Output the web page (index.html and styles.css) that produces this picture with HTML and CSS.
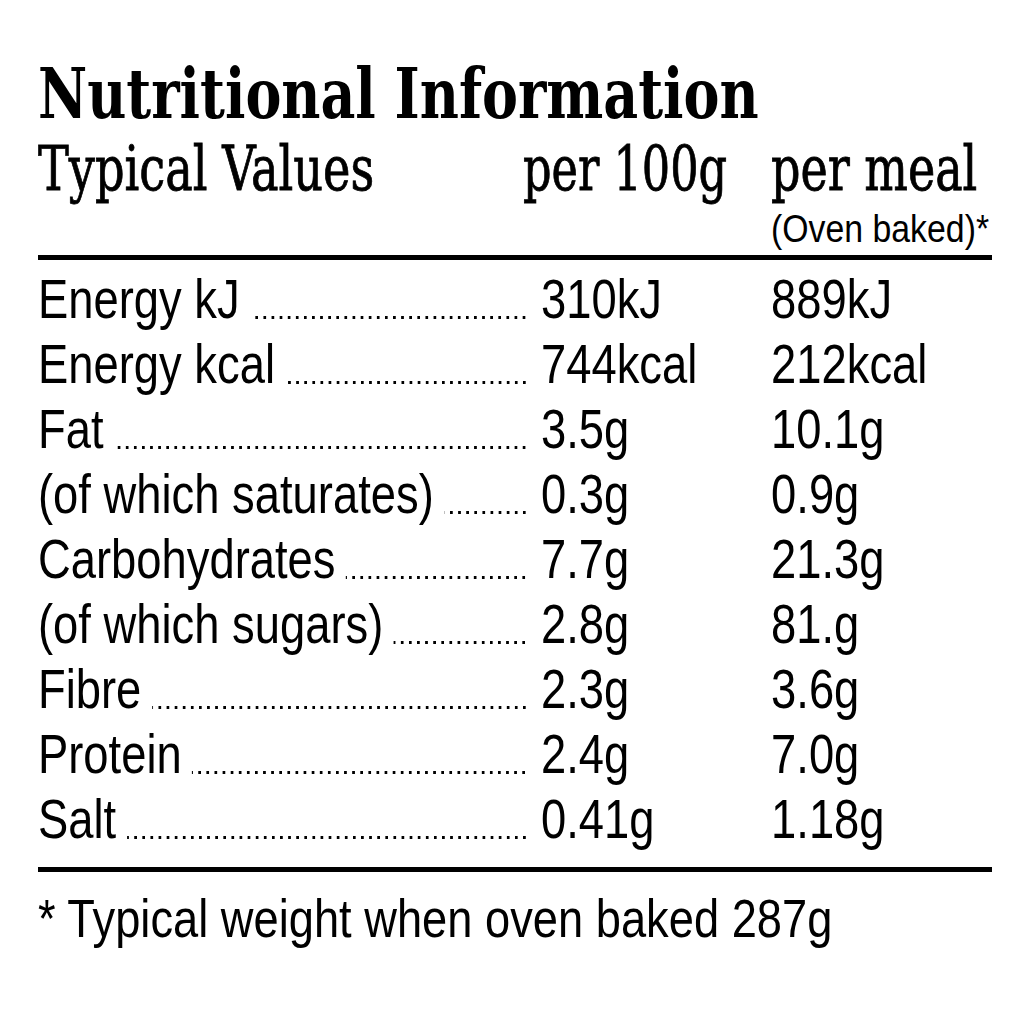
FILE: index.html
```html
<!DOCTYPE html>
<html lang="en">
<head>
<meta charset="utf-8">
<title>Nutritional Information</title>
<link rel="stylesheet" href="styles.css">
</head>
<body>
<main class="label">
  <h1 class="title">Nutritional Information</h1>
  <div class="head">
    <div class="head-cell head-label">Typical Values</div>
    <div class="head-cell per100">per 100g</div>
    <div class="head-cell permeal">per meal</div>
    <div class="note">(Oven baked)*</div>
  </div>
  <div class="rule rule-top"></div>
  <div class="rows">
    <div class="row"><div class="item"><span class="name">Energy kJ</span><span class="leader"></span></div><span class="v1">310kJ</span><span class="v2">889kJ</span></div>
    <div class="row"><div class="item"><span class="name">Energy kcal</span><span class="leader"></span></div><span class="v1">744kcal</span><span class="v2">212kcal</span></div>
    <div class="row"><div class="item"><span class="name">Fat</span><span class="leader"></span></div><span class="v1">3.5g</span><span class="v2">10.1g</span></div>
    <div class="row"><div class="item"><span class="name">(of which saturates)</span><span class="leader"></span></div><span class="v1">0.3g</span><span class="v2">0.9g</span></div>
    <div class="row"><div class="item"><span class="name">Carbohydrates</span><span class="leader"></span></div><span class="v1">7.7g</span><span class="v2">21.3g</span></div>
    <div class="row"><div class="item"><span class="name">(of which sugars)</span><span class="leader"></span></div><span class="v1">2.8g</span><span class="v2">81.g</span></div>
    <div class="row"><div class="item"><span class="name">Fibre</span><span class="leader"></span></div><span class="v1">2.3g</span><span class="v2">3.6g</span></div>
    <div class="row"><div class="item"><span class="name">Protein</span><span class="leader"></span></div><span class="v1">2.4g</span><span class="v2">7.0g</span></div>
    <div class="row"><div class="item"><span class="name">Salt</span><span class="leader"></span></div><span class="v1">0.41g</span><span class="v2">1.18g</span></div>
  </div>
  <div class="rule rule-bottom"></div>
  <p class="foot">* Typical weight when oven baked 287g</p>
</main>
</body>
</html>
```

FILE: styles.css
```css
html, body {
  margin: 0;
  padding: 0;
  background: #fff;
  overflow: hidden;
}

.label {
  width: 954px;
  margin-left: 38px;
  padding-top: 56px;
  color: #000;
}

.title {
  margin: 0;
  font-family: "DejaVu Serif Condensed", "DejaVu Serif", serif;
  font-weight: 700;
  font-size: 70px;
  line-height: 76px;
  white-space: nowrap;
  transform: scaleX(0.855);
  transform-origin: left top;
}

.head {
  display: grid;
  grid-template-columns: 485px 248px 1fr;
  margin-top: 3px;
  font-family: "DejaVu Serif Condensed", "DejaVu Serif", serif;
  font-size: 62px;
  line-height: 68px;
  white-space: nowrap;
  -webkit-text-stroke: 0.8px #000;
}

.head-cell {
  transform-origin: left top;
}

.head-label {
  transform: scaleX(0.829);
}

.per100 {
  transform: scaleX(0.80);
}

.permeal {
  transform: scaleX(0.825);
}

.note {
  grid-column: 3;
  margin-top: 4px;
  font-family: "Liberation Sans", sans-serif;
  font-size: 38px;
  line-height: 44px;
  -webkit-text-stroke: 0;
  transform: scaleX(0.89);
  transform-origin: left top;
}

.rule {
  height: 5px;
  background: #000;
}

.rule-top {
  margin-top: 4px;
}

.rows {
  width: 1178px;
  padding-top: 6px;
  transform: scaleX(0.81);
  transform-origin: left top;
  font-family: "Liberation Sans", sans-serif;
  font-size: 56px;
  line-height: 65px;
  white-space: nowrap;
}

.row {
  display: grid;
  grid-template-columns: 621px 284px 1fr;
}

.item {
  display: flex;
  padding-right: 16px;
}

.leader {
  flex: 1;
  align-self: flex-end;
  height: 5px;
  margin: 0 0 11px 13px;
  background-image: radial-gradient(2.2px 1.8px at 50% 50%, #000 85%, rgba(0, 0, 0, 0) 100%);
  background-size: 10px 5px;
  background-repeat: repeat-x;
  background-position: right bottom;
}

.rule-bottom {
  margin-top: 16px;
}

.foot {
  margin: 17px 0 0;
  font-family: "Liberation Sans", sans-serif;
  font-size: 53px;
  line-height: 60px;
  white-space: nowrap;
  transform: scaleX(0.854);
  transform-origin: left top;
}
```
